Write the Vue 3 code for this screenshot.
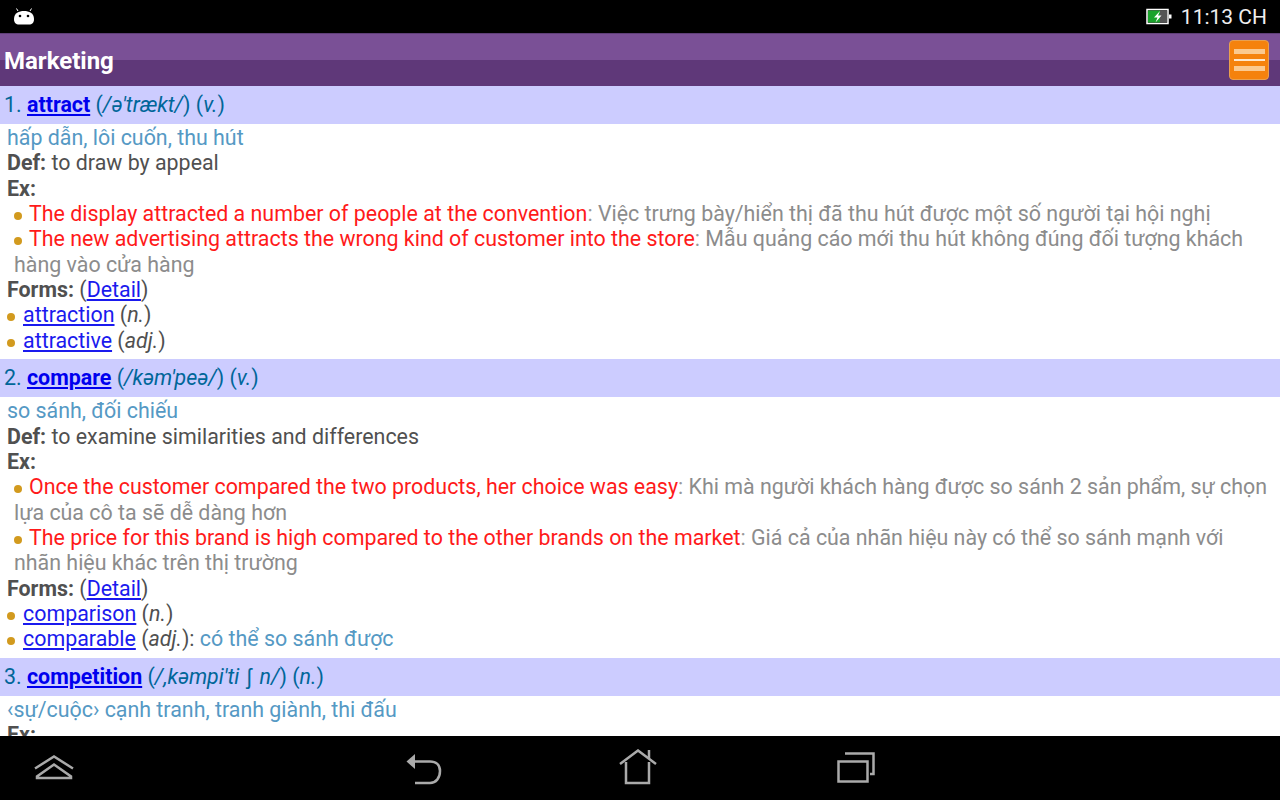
<template>
  <div class="screen">
    <div class="status-bar">
      <svg class="android" width="24" height="18" viewBox="0 0 24 18">
        <path d="M6 3 L4.500 .5 M18 3 L19.500 .5" stroke="#fff" stroke-width="1" fill="none" />
        <path d="M2 11 C2 5 7 3 12 3 C17 3 22 5 22 11 C22 15 20 16.500 17 16.500 H7 C4 16.500 2 15 2 11 Z" fill="#fff" />
        <circle cx="8" cy="8" r="1.300" fill="#000" />
        <circle cx="16" cy="8" r="1.300" fill="#000" />
      </svg>
      <div class="status-right">
        <svg class="battery" width="26" height="18" viewBox="0 0 26 18">
          <rect x="1" y="1.500" width="21" height="14" fill="#111" stroke="#fff" stroke-width="1.500" />
          <rect x="2" y="2.500" width="12" height="12" fill="#1aa32b" />
          <rect x="14" y="2.500" width="7" height="12" fill="#555" />
          <rect x="23" y="6.500" width="2.500" height="4" fill="#fff" />
          <path d="M14 3 L8 9.500 H11.500 L9.500 14.500 L15.500 7.500 H12 Z" fill="#fff" />
        </svg>
        <span class="clock">11:13 CH</span>
      </div>
    </div>

    <div class="action-bar">
      <span class="title">Marketing</span>
      <button class="menu-btn">
        <span class="menu-bar"></span>
        <span class="menu-line"></span>
        <span class="menu-bar"></span>
      </button>
    </div>

    <div class="content">
      <template v-for="word in words" :key="word.num">
        <div class="word-head">
          {{ word.num }}. <a class="head-link">{{ word.word }}</a> (<i>/{{ word.ipa }}<span v-if="word.ipaEnd" class="esh"> ʃ </span>{{ word.ipaEnd }}/</i>) (<i>{{ word.pos }}</i>)
        </div>
        <div class="word-body">
          <div class="meaning">{{ word.meaning }}</div>
          <div v-if="word.def" class="line"><b>Def:</b> {{ word.def }}</div>
          <div class="line"><b>Ex:</b></div>
          <div v-for="ex in word.examples" :key="ex.en" class="example">
            <span class="dot dot-ex"></span><span class="en">{{ ex.en }}</span>: <span class="vi">{{ ex.vi }}</span>
          </div>
          <template v-if="word.forms">
            <div class="line"><b>Forms:</b> (<a class="link">Detail</a>)</div>
            <div v-for="f in word.forms" :key="f.word" class="line">
              <span class="dot"></span><a class="link">{{ f.word }}</a> (<i>{{ f.pos }}</i>)<span v-if="f.vi">: <span class="meaning">{{ f.vi }}</span></span>
            </div>
          </template>
        </div>
      </template>
    </div>

    <div class="nav-bar">
      <svg class="nav-icon nav-hide" width="40" height="28" viewBox="0 0 40 28">
        <path d="M1 14.500 L20 2.500 L39 14.500" />
        <path d="M3 24 V22.500 L20 10.500 L37 22.500 V24 Z" />
      </svg>
      <svg class="nav-icon nav-back" width="38" height="34" viewBox="0 0 38 34">
        <path d="M1.500 10.500 L10 3 V18 Z" fill="#aaa" stroke="none" />
        <path d="M10 10.500 H25 C31 10.500 35 14 35 20 C35 27 31 32 25 32 H10" />
      </svg>
      <svg class="nav-icon nav-home" width="38" height="36" viewBox="0 0 38 36">
        <path d="M1 15 L19 1.500 L37 15" />
        <path d="M30 1 V9.500" />
        <path d="M7 13 V34 H30 V13" />
      </svg>
      <svg class="nav-icon nav-recent" width="38" height="32" viewBox="0 0 38 32">
        <path d="M8 1.500 H36.500 V22 H33" />
        <rect x="1.500" y="9.500" width="29" height="20" />
      </svg>
    </div>
  </div>
</template>

<script setup>
const words = [
  {
    num: 1,
    word: 'attract',
    ipa: 'ə\'trækt',
    pos: 'v.',
    meaning: 'hấp dẫn, lôi cuốn, thu hút',
    def: 'to draw by appeal',
    examples: [
      {
        en: 'The display attracted a number of people at the convention',
        vi: 'Việc trưng bày/hiển thị đã thu hút được một số người tại hội nghị',
      },
      {
        en: 'The new advertising attracts the wrong kind of customer into the store',
        vi: 'Mẫu quảng cáo mới thu hút không đúng đối tượng khách hàng vào cửa hàng',
      },
    ],
    forms: [
      { word: 'attraction', pos: 'n.' },
      { word: 'attractive', pos: 'adj.' },
    ],
  },
  {
    num: 2,
    word: 'compare',
    ipa: 'kəm\'peə',
    pos: 'v.',
    meaning: 'so sánh, đối chiếu',
    def: 'to examine similarities and differences',
    examples: [
      {
        en: 'Once the customer compared the two products, her choice was easy',
        vi: 'Khi mà người khách hàng được so sánh 2 sản phẩm, sự chọn lựa của cô ta sẽ dễ dàng hơn',
      },
      {
        en: 'The price for this brand is high compared to the other brands on the market',
        vi: 'Giá cả của nhãn hiệu này có thể so sánh mạnh với nhãn hiệu khác trên thị trường',
      },
    ],
    forms: [
      { word: 'comparison', pos: 'n.' },
      { word: 'comparable', pos: 'adj.', vi: 'có thể so sánh được' },
    ],
  },
  {
    num: 3,
    word: 'competition',
    ipa: ',kəmpi\'ti',
    ipaEnd: 'n',
    pos: 'n.',
    meaning: '‹sự/cuộc› cạnh tranh, tranh giành, thi đấu',
    examples: [],
  },
]
</script>

<style>
html, body {
  margin: 0;
  background: #000;
}
</style>

<style scoped>
.screen {
  width: 1280px;
  height: 800px;
  display: flex;
  flex-direction: column;
  overflow: hidden;
  font-family: Roboto, "Noto Sans", sans-serif;
  background: #fff;
}

.status-bar {
  height: 33px;
  background: #000;
  display: flex;
  align-items: center;
  justify-content: space-between;
  padding: 0 13px 0 12px;
  flex-shrink: 0;
}

.status-right {
  display: flex;
  align-items: center;
  gap: 9px;
}

.clock {
  color: #eee;
  font-size: 21px;
}

.action-bar {
  height: 53px;
  flex-shrink: 0;
  display: flex;
  align-items: center;
  justify-content: space-between;
  padding: 0 11px 0 4px;
  background: linear-gradient(#7a5096 0, #7a5096 26px, #5f3879 26px, #5f3879 100%);
  border-top: 1px solid #5f3f78;
  box-sizing: border-box;
}

.title {
  color: #fff;
  font-size: 24px;
  font-weight: 700;
  padding-top: 2px;
}

.menu-btn {
  width: 40px;
  height: 40px;
  padding: 0;
  border: 1px solid #e8a050;
  border-radius: 4px;
  background: #f5820d;
  display: flex;
  flex-direction: column;
  align-items: center;
  justify-content: center;
  gap: 5px;
}

.menu-bar {
  width: 31px;
  height: 5px;
  background: #fbc98f;
}

.menu-line {
  width: 31px;
  height: 2px;
  background: #fde6cc;
}

.content {
  flex: 1;
  min-height: 0;
  overflow: hidden;
  font-size: 21.4px;
  line-height: 25.33px;
  color: #505050;
}

.word-head {
  height: 38px;
  line-height: 38px;
  padding-left: 4px;
  background: #ccccff;
  color: #006699;
}

.esh {
  font-style: normal;
  padding: 0 2px;
}

.head-link {
  color: #0000ee;
  font-weight: 700;
  text-decoration: underline;
}

.word-body {
  padding: 1px 7px 6.300px;
}

.meaning {
  color: #5599c4;
}

.example {
  padding-left: 7px;
  color: #999;
}

.en {
  color: #ff1a1a;
}

.vi {
  color: #8c8c8c;
}

.link {
  color: #1a1aee;
  text-decoration: underline;
}

.dot {
  display: inline-block;
  width: 8px;
  height: 8px;
  margin-right: 8px;
  border-radius: 50%;
  background: #d29a1e;
  vertical-align: 1px;
}

.dot-ex {
  margin-right: 7px;
}

.nav-bar {
  height: 64px;
  flex-shrink: 0;
  background: #000;
  position: relative;
}

.nav-icon {
  position: absolute;
  fill: none;
  stroke: #aaa;
  stroke-width: 2.500;
}

.nav-hide {
  left: 34px;
  top: 18px;
}

.nav-back {
  left: 405px;
  top: 15px;
}

.nav-home {
  left: 619px;
  top: 13px;
}

.nav-recent {
  left: 837px;
  top: 16px;
}
</style>
